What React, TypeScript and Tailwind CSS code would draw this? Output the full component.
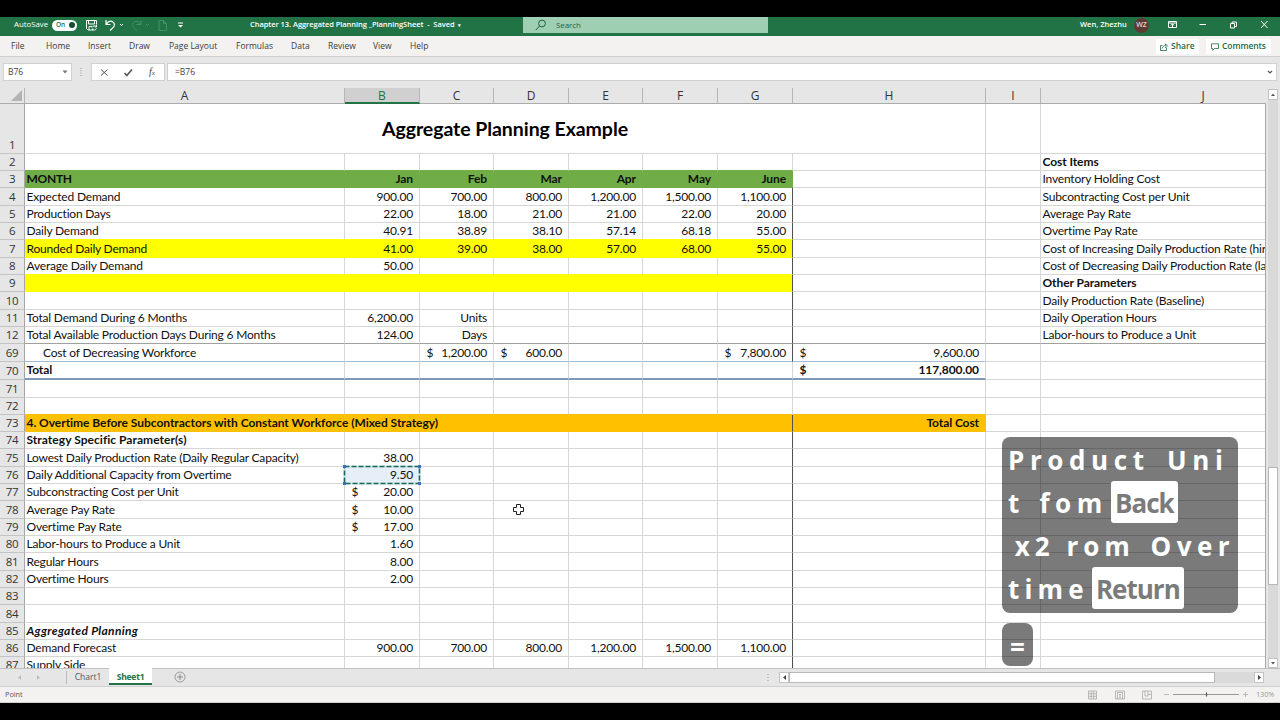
import { ReactNode } from "react";

const WIDTHS = [
  "w-[320px]", "w-[75px]", "w-[74px]", "w-[75px]", "w-[74px]",
  "w-[75px]", "w-[75px]", "w-[193px]", "w-[55px]", "w-[225px]",
];
const LETTERS = ["A", "B", "C", "D", "E", "F", "G", "H", "I", "J"];

type Fill = "green" | "yellow" | "orange";
type Row = {
  n: number;
  h: string;
  cells?: Record<number, string>;
  money?: number[];
  bold?: boolean;
  boldAt?: number[];
  italic?: boolean;
  indent?: boolean;
  fill?: Fill;
  under?: string;
  divider?: boolean;
  freeze?: boolean;
  track?: string;
};

const months = (a: string, v: string[], j?: string): Record<number, string> => {
  const cells: Record<number, string> = { 0: a };
  v.forEach((x, i) => (cells[i + 1] = x));
  if (j) cells[9] = j;
  return cells;
};

const GREEN_LINE = "border-b-[#70ad47]";
const YELLOW_LINE = "border-b-[#ffff00]";
const ORANGE_LINE = "border-b-[#ffc000]";

const ROWS: Row[] = [
  { n: 2, h: "h-[17px]", cells: { 9: "Cost Items" }, bold: true, under: GREEN_LINE },
  { n: 3, h: "h-[17px]", cells: months("MONTH", ["Jan", "Feb", "Mar", "Apr", "May", "June"], "Inventory Holding Cost"), boldAt: [0, 1, 2, 3, 4, 5, 6], fill: "green", track: "tracking-[-0.3px]" },
  { n: 4, h: "h-[18px]", cells: months("Expected Demand", ["900.00", "700.00", "800.00", "1,200.00", "1,500.00", "1,100.00"], "Subcontracting Cost per Unit"), divider: true },
  { n: 5, h: "h-[17px]", cells: months("Production Days", ["22.00", "18.00", "21.00", "21.00", "22.00", "20.00"], "Average Pay Rate"), divider: true },
  { n: 6, h: "h-[17px]", cells: months("Daily Demand", ["40.91", "38.89", "38.10", "57.14", "68.18", "55.00"], "Overtime Pay Rate"), divider: true, under: YELLOW_LINE },
  { n: 7, h: "h-[18px]", cells: months("Rounded Daily Demand", ["41.00", "39.00", "38.00", "57.00", "68.00", "55.00"], "Cost of Increasing Daily Production Rate (hiring)"), divider: true, fill: "yellow" },
  { n: 8, h: "h-[17px]", cells: months("Average Daily Demand", ["50.00"], "Cost of Decreasing Daily Production Rate (layoff)"), divider: true, under: YELLOW_LINE },
  { n: 9, h: "h-[17px]", cells: { 9: "Other Parameters" }, bold: true, divider: true, fill: "yellow" },
  { n: 10, h: "h-[18px]", cells: { 9: "Daily Production Rate (Baseline)" }, divider: true },
  { n: 11, h: "h-[17px]", cells: months("Total Demand During 6 Months", ["6,200.00", "Units"], "Daily Operation Hours"), divider: true },
  { n: 12, h: "h-[17px]", cells: months("Total Available Production Days During 6 Months", ["124.00", "Days"], "Labor-hours to Produce a Unit"), divider: true, freeze: true },
  { n: 69, h: "h-[18px]", cells: { 0: "Cost of Decreasing Workforce", 2: "1,200.00", 3: "600.00", 6: "7,800.00", 7: "9,600.00" }, money: [2, 3, 6, 7], indent: true, divider: true, under: "border-b-[#a3bcd6]" },
  { n: 70, h: "h-[18px]", cells: { 0: "Total", 7: "117,800.00" }, money: [7], bold: true, under: "border-b-2 border-b-[#7f99bb]" },
  { n: 71, h: "h-[18px]" },
  { n: 72, h: "h-[17px]", under: ORANGE_LINE },
  { n: 73, h: "h-[17px]", cells: { 0: "4. Overtime Before Subcontractors with Constant Workforce (Mixed Strategy)", 7: "Total Cost" }, bold: true, fill: "orange", divider: true, track: "tracking-[-0.04px]" },
  { n: 74, h: "h-[17px]", cells: { 0: "Strategy Specific Parameter(s)" }, bold: true, divider: true, track: "tracking-[0.04px]" },
  { n: 75, h: "h-[18px]", cells: { 0: "Lowest Daily Production Rate (Daily Regular Capacity)", 1: "38.00" }, divider: true },
  { n: 76, h: "h-[17px]", cells: { 0: "Daily Additional Capacity from Overtime", 1: "9.50" }, divider: true },
  { n: 77, h: "h-[17px]", cells: { 0: "Subconstracting Cost per Unit", 1: "20.00" }, money: [1], divider: true },
  { n: 78, h: "h-[18px]", cells: { 0: "Average Pay Rate", 1: "10.00" }, money: [1], divider: true },
  { n: 79, h: "h-[17px]", cells: { 0: "Overtime Pay Rate", 1: "17.00" }, money: [1], divider: true },
  { n: 80, h: "h-[17px]", cells: { 0: "Labor-hours to Produce a Unit", 1: "1.60" }, divider: true },
  { n: 81, h: "h-[18px]", cells: { 0: "Regular Hours", 1: "8.00" }, divider: true },
  { n: 82, h: "h-[17px]", cells: { 0: "Overtime Hours", 1: "2.00" }, divider: true },
  { n: 83, h: "h-[17px]", divider: true },
  { n: 84, h: "h-[18px]", divider: true },
  { n: 85, h: "h-[17px]", cells: { 0: "Aggregated Planning" }, bold: true, italic: true, divider: true, track: "tracking-[0.32px]" },
  { n: 86, h: "h-[17px]", cells: months("Demand Forecast", ["900.00", "700.00", "800.00", "1,200.00", "1,500.00", "1,100.00"]), divider: true },
  { n: 87, h: "h-[17px]", cells: { 0: "Supply Side" }, divider: true },
];

const FILLS: Record<Fill, string> = {
  green: "bg-[#70ad47] border-r-[#70ad47] border-b-[#70ad47]",
  yellow: "bg-[#ffff00] border-r-[#ffff00] border-b-[#ffff00]",
  orange: "bg-[#ffc000] border-r-[#ffc000] border-b-[#ffc000]",
};

function Selection() {
  return (
    <div className="pointer-events-none absolute -left-[2px] -top-[2px] z-20 h-[20px] w-[78px]">
      <svg width="78" height="20" viewBox="0 0 78 20" fill="none">
        <rect x="1.5" y="1.5" width="75" height="17" stroke="#cfe3f3" strokeWidth="2" />
        <rect x="1.5" y="1.5" width="75" height="17" stroke="#1c6b50" strokeWidth="1.6" strokeDasharray="5 2" />
        <path d="M0 0h3v3H0zM75 0h3v3h-3zM0 17h3v3H0zM75 17h3v3h-3z" fill="#3a72b8" />
      </svg>
    </div>
  );
}

function Cell({ row, i }: { row: Row; i: number }) {
  const filled = row.fill && (row.fill === "orange" ? i <= 7 : i <= 6);
  const inTable = i <= (row.n >= 69 && row.n <= 73 ? 7 : 6);
  const bold = row.boldAt ? row.boldAt.includes(i) : row.bold;
  const text = row.cells?.[i] ?? "";
  const left = i === 0 || i === 9;
  const selected = row.n === 76 && i === 1;

  let edge = "border-r-[#d6d6d6] border-b-[#d6d6d6]";
  if (filled && row.fill) edge = FILLS[row.fill];
  else if (row.freeze) edge = "border-r-[#d6d6d6] border-b-[#a0a0a0]";
  else if (row.under && inTable) edge = "border-r-[#d6d6d6] " + row.under;
  const dark = row.divider && i === 6 ? "border-r-[#505050]!" : "";

  let tracking = left ? "tracking-[-0.19px]" : "tracking-[-0.2px]";
  if (bold) tracking = i === 0 && row.track ? row.track : "tracking-[-0.08px]";

  return (
    <div
      className={`relative flex shrink-0 items-center border-r border-b whitespace-nowrap ${WIDTHS[i]} ${edge} ${dark} ${left ? "justify-start" : "justify-end pr-[6px]"} ${i === 9 ? "overflow-hidden" : ""} ${i === 0 ? "z-10" : ""} ${left ? (row.indent && i === 0 ? "pl-[18px]" : "pl-[1.5px]") : ""} ${bold ? "font-bold" : ""} ${tracking} ${row.italic ? "italic" : ""} ${selected ? "bg-[#e6eef8]" : ""}`}
    >
      {row.money?.includes(i) && <span className="mr-auto pl-[6.5px]">$</span>}
      <span>{text}</span>
      {selected && <Selection />}
    </div>
  );
}

function RowHeader({ children, tall }: { children: ReactNode; tall?: boolean }) {
  return (
    <div className={`flex w-[25px] shrink-0 justify-center border-r border-b border-r-[#a6a6a6] border-b-[#c4c4c4] bg-[#e6e6e6] font-['Open_Sans',sans-serif] text-[11.5px] tracking-[-0.4px] text-[#333] ${tall ? "items-end pb-px leading-[15px]" : "items-center"}`}>
      {children}
    </div>
  );
}

function Sheet() {
  return (
    <div className="flex h-[564px] w-[1266px] shrink-0 flex-col overflow-hidden border-r border-[#a6a6a6] bg-white font-[Lato,sans-serif] text-[12px] leading-[16px] text-[#111]">
      <div className="flex h-[50px] shrink-0">
        <RowHeader tall>1</RowHeader>
        <div className="flex w-[961px] shrink-0 items-center justify-center border-r border-b border-[#d6d6d6] text-[19.5px] font-bold tracking-[-0.06px] text-black">
          Aggregate Planning Example
        </div>
        <div className="w-[55px] shrink-0 border-r border-b border-[#d6d6d6]" />
        <div className="w-[225px] shrink-0 border-b border-[#d6d6d6]" />
      </div>
      {ROWS.map((row) => (
        <div key={row.n} className={`flex shrink-0 ${row.h}`}>
          <RowHeader>{row.n}</RowHeader>
          {LETTERS.map((l, i) => (
            <Cell key={l} row={row} i={i} />
          ))}
        </div>
      ))}
    </div>
  );
}

function TitleBar() {
  return (
    <div className="flex h-[19px] shrink-0 items-center bg-[#217346] pb-[3px] text-[7.5px] font-semibold text-white">
      <div className="flex w-[250px] shrink-0 items-center pl-[14px]">
        <span className="w-[38px] text-[7.8px] font-medium">AutoSave</span>
        <div className="flex h-[11px] w-[25px] items-center justify-between rounded-full bg-white pr-[2px] pl-[4px] text-[6.5px] text-[#217346]">
          On<span className="size-[6px] rounded-full bg-[#14502f]" />
        </div>
        <svg className="ml-[9px]" width="96" height="14" viewBox="0 0 96 14" fill="none" stroke="#fff" strokeWidth="1">
          <path d="M.5 2.500h10v4M.5 2.500v8l1.500 1.500H5M2.500 2.500v3.500h6V2.500M3 12V8.500h3M6 9.500a3 3 0 0 1 4.500-1M10.500 7v2H9M10.500 10.500a3 3 0 0 1-4.500 1M6 13v-2h1.500" />
          <path d="M20 2v4.500h4.500M20.200 6.300C22 3.500 24.500 2.600 26.500 3.700c2.300 1.300 2.500 4 .8 5.700L24 12.500" strokeWidth="1.200" />
          <path d="m34 6 1.500 1.500L37 6" />
          <g stroke="#3f9463">
            <path d="M55 2v4.500h-4.500M54.800 6.300C53 3.500 50.500 2.600 48.500 3.700c-2.300 1.300-2.500 4-.8 5.700L51 12.500" />
            <path d="m60 6 1.500 1.500L63 6M73 2.500h4.500l3 3v7H73zM77.500 2.500v3h3" />
          </g>
        </svg>
        <svg className="-ml-[5px]" width="7" height="8" viewBox="0 0 7 8">
          <path d="M1 1.500h5v1H1zM1 4h5L3.500 6.500z" fill="#fff" />
        </svg>
      </div>
      <span className="w-[273px] shrink-0 pb-px text-[7.5px] tracking-[-0.05px] whitespace-pre">Chapter 13. Aggregated Planning _PlanningSheet  -  Saved  <span className="text-[5px]">▾</span></span>
      <div className="flex h-[16px] w-[245px] shrink-0 items-center bg-[#9fcfb3] text-[8px] font-normal text-[#1d6440]">
        <svg className="ml-[12px]" width="12" height="12" viewBox="0 0 12 12" fill="none" stroke="#1d6440">
          <circle cx="7" cy="4.500" r="3.400" />
          <path d="M4.600 7 .8 11" />
        </svg>
        <span className="ml-[9px] tracking-[-0.1px]">Search</span>
      </div>
      <span className="ml-[312px] w-[54px] shrink-0 whitespace-nowrap">Wen, Zhezhu</span>
      <span className="flex size-[15px] shrink-0 items-center justify-center rounded-full bg-[#5f3a33] text-[7px] font-normal">WZ</span>
      <svg className="ml-[18px]" width="112" height="12" viewBox="0 0 112 12" fill="none" stroke="#fff" strokeWidth="1">
        <path d="M1.500 2.500h8v6h-8zM1.500 4h8M5.500 8V4.800M4 6.300l1.500-1.500L7 6.300" />
        <path d="M32.500 5.500h6.500" />
        <path d="M63.500 4.500h4v4.500h-4zM65 4.500v-1.500h4.500v4.500h-2" />
        <path d="m94 2 6.500 7M100.500 2 94 9" />
      </svg>
    </div>
  );
}

const MENU: [string, string][] = [
  ["File", "w-[35px]"], ["Home", "w-[42px]"], ["Insert", "w-[41px]"], ["Draw", "w-[40px]"],
  ["Page Layout", "w-[67px]"], ["Formulas", "w-[55px]"], ["Data", "w-[37px]"],
  ["Review", "w-[45px]"], ["View", "w-[37px]"], ["Help", "w-[30px]"],
];

function Menu() {
  return (
    <div className="flex h-[21px] shrink-0 items-center border-b border-[#d2d0ce] bg-[#f3f2f1] pt-px pl-[11px] text-[8.5px] text-[#3b3a39]">
      {MENU.map(([m, w]) => (
        <span key={m} className={`shrink-0 whitespace-nowrap ${w}`}>{m}</span>
      ))}
      <div className="mr-[9px] ml-auto flex gap-[7px] font-semibold text-[#1e6b45]">
        <div className="flex h-[15px] w-[43px] items-center gap-[3px] bg-white pl-[4px]">
          <svg width="8" height="8" viewBox="0 0 8 8" fill="none" stroke="#1e6b45" strokeWidth=".8">
            <path d="M2.500 2.500H.5v5h6V5M2.200 5.500C2.500 3.500 4 2.500 5.500 2.500V.8l2 2.200-2 2V3.700" />
          </svg>
          Share
        </div>
        <div className="flex h-[15px] w-[65px] items-center gap-[3px] bg-white pl-[5px]">
          <svg width="8" height="8" viewBox="0 0 8 8" fill="none" stroke="#1e6b45" strokeWidth=".8">
            <path d="M.5.8h7v4.700H3.500L1.800 7.300V5.500H.5z" />
          </svg>
          <span className="tracking-[-0.1px]">Comments</span>
        </div>
      </div>
    </div>
  );
}

function FormulaBar() {
  return (
    <div className="flex h-[24px] shrink-0 items-start bg-[#e6e6e6] pt-[6px] text-[8.5px] text-[#444]">
      <div className="ml-[3px] flex h-[18px] w-[69px] items-center justify-between border border-[#d0d0d0] bg-white pr-[3px] pl-[4px]">
        B76
        <svg width="6" height="4" viewBox="0 0 6 4"><path d="M.5.5h5L3 3.500z" fill="#777" /></svg>
      </div>
      <svg className="mt-[5px] ml-[8px]" width="2" height="8" viewBox="0 0 2 8" fill="#999">
        <path d="M.5 0h1v1h-1zM.5 2.300h1v1h-1zM.5 4.600h1v1h-1zM.5 7h1v1h-1z" />
      </svg>
      <div className="ml-[9px] flex h-[18px] w-[74px] items-center border border-[#d0d0d0] bg-white">
        <svg className="ml-[8px]" width="34" height="9" viewBox="0 0 34 9" fill="none" stroke="#555">
          <path d="m1 1.500 6.500 6M7.500 1.500 1 7.500" />
          <path d="m24.500 5 2.300 2.500L32 1.500" strokeWidth="1.600" />
        </svg>
        <span className="ml-[15px] pb-px font-['Liberation_Serif',serif] text-[10px] italic">f<span className="text-[7px]">x</span></span>
      </div>
      <div className="ml-[2px] flex h-[18px] w-[1110px] items-center border border-[#d0d0d0] bg-white pr-[3px] pl-[7px]">
        =B76
        <svg className="ml-auto" width="6" height="5" viewBox="0 0 6 5" fill="none" stroke="#555" strokeWidth="1.200"><path d="m1 1 2 2 2-2" /></svg>
      </div>
    </div>
  );
}

function ColumnHeaders() {
  return (
    <div className="flex h-[23px] w-[1266px] shrink-0 items-end overflow-hidden bg-[#e6e6e6] font-['Open_Sans',sans-serif] text-[12px] text-[#333]">
      <div className="flex h-[16px] w-[25px] shrink-0 items-start justify-end border-r border-b border-r-[#b5b5b5] border-b-[#ababab] pt-[2px] pr-[2px]">
        <svg width="11" height="11" viewBox="0 0 11 11"><path d="M11 0v11H0z" fill="#b3b3b3" /></svg>
      </div>
      {LETTERS.map((l, i) => (
        <div
          key={l}
          className={`flex h-[16px] shrink-0 items-center justify-center border-r ${l === "J" ? "w-[325px]" : WIDTHS[i]} ${l === "B" ? "border-b-2 border-r-[#b5b5b5] border-b-[#217346] bg-[#d0d0d0] pt-px text-[#217346]" : "border-b border-r-[#b5b5b5] border-b-[#ababab]"}`}
        >
          {l}
        </div>
      ))}
    </div>
  );
}

function VerticalScroll() {
  return (
    <div className="flex w-[14px] flex-1 flex-col items-center bg-[#e6e6e6] pt-[8px]">
      <div className="flex h-[11px] w-[10px] items-center justify-center border border-[#c3c3c3] bg-white">
        <svg width="4" height="3" viewBox="0 0 4 3"><path d="M0 3h4L2 .5z" fill="#555" /></svg>
      </div>
      <div className="flex w-[10px] flex-1 flex-col bg-[#d9d9d9]">
        <div className="mt-[367px] h-[118px] border border-[#b5b5b5] bg-white" />
      </div>
      <div className="flex h-[10px] w-[10px] items-center justify-center border border-[#c3c3c3] bg-white">
        <svg width="4" height="3" viewBox="0 0 4 3"><path d="M0 0h4L2 2.500z" fill="#555" /></svg>
      </div>
    </div>
  );
}

function TabBar() {
  return (
    <div className="flex h-[18px] shrink-0 items-start border-t border-[#c0c0c0] bg-[#e6e6e6] text-[8.5px] text-[#555]">
      <svg className="mt-[6px] ml-[17px]" width="24" height="5" viewBox="0 0 24 5" fill="#bdbdbd">
        <path d="M4 0v5L1 2.500zM20 0v5l3-2.500z" />
      </svg>
      <div className="mt-[2px] ml-[25px] flex h-[13px] w-[43px] items-center justify-center border-l border-[#bbb] pb-px">Chart1</div>
      <div className="-mt-px flex h-[17px] w-[43px] items-center justify-center border-b-2 border-[#217346] bg-white pt-[3px] font-bold tracking-[-0.2px] text-[#217346]">Sheet1</div>
      <svg className="mt-[2px] ml-[22px]" width="12" height="12" viewBox="0 0 12 12" fill="none" stroke="#888">
        <circle cx="6" cy="6" r="5" strokeWidth=".8" />
        <path d="M3 6h6M6 3v6" />
      </svg>
      <svg className="mt-[5px] ml-[581px]" width="2" height="8" viewBox="0 0 2 8" fill="#999">
        <path d="M.5 0h1v1h-1zM.5 3h1v1h-1zM.5 6h1v1h-1z" />
      </svg>
      <div className="mt-[3px] ml-[10px] flex h-[11px] w-[485px] bg-[#dadada]">
        <div className="flex w-[10px] items-center justify-center border border-[#c3c3c3] bg-white">
          <svg width="3" height="5" viewBox="0 0 3 5"><path d="M3 0v5L0 2.500z" fill="#444" /></svg>
        </div>
        <div className="w-[426px] border border-[#b9b9b9] bg-white" />
        <div className="ml-auto flex w-[10px] items-center justify-center border border-[#c3c3c3] bg-white">
          <svg width="3" height="5" viewBox="0 0 3 5"><path d="M0 0v5l3-2.500z" fill="#444" /></svg>
        </div>
      </div>
    </div>
  );
}

function StatusBar() {
  return (
    <div className="flex h-[17px] shrink-0 items-center border-t border-b border-[#d0d0d0] bg-[#f3f2f1] pl-[5px] text-[7.3px] text-[#555]">
      Point
      <svg className="ml-auto" width="168" height="10" viewBox="0 0 168 10" fill="none" stroke="#aaa" strokeWidth=".8">
        <path d="M.5 1h8v8h-8zM.5 3.700h8M.5 6.300h8M3.200 1v8M5.800 1v8" />
        <path d="M27.500 1h9v8h-9zM29.500 2.500h5V9M29.500 2.500V9M31 4.500h2M31 6h2M31 7.500h2" />
        <path d="M54.500 1h9v8h-9zM57 1v5h3V1M60 4.500h3.500" />
        <path d="M76 4.500h5M155 4.500h5M157.500 2v5" />
        <path d="M85 4.500h66" stroke="#999" strokeWidth="1.200" />
        <path d="M118.500 2.500v4" stroke="#555" strokeWidth="1.200" />
      </svg>
      <span className="mr-[5px] w-[19px] text-[7.3px] tracking-[-0.1px] whitespace-nowrap text-[#999]">130%</span>
    </div>
  );
}

function Key({ children }: { children: ReactNode }) {
  return (
    <span className="mb-[3px] ml-[3px] flex h-[42px] items-center rounded-[3px] bg-white px-[4px] pt-[3px] tracking-[-1px] text-[#7b7b7b]">{children}</span>
  );
}

function Keystrokes() {
  return (
    <div className="absolute top-[437px] left-[1002px] z-30 flex flex-col items-start gap-[10px] font-['Open_Sans',sans-serif] text-[26px] leading-[43px] font-bold whitespace-pre text-white">
      <div className="flex h-[176px] w-[236px] flex-col rounded-[8px] bg-black/52 pt-[2px] pl-[6px] tracking-[5.2px]">
        <div className="flex h-[43px] items-center tracking-[5.6px]">Product <span className="ml-[5px]">Uni</span></div>
        <div className="flex h-[43px] items-center">t <span className="ml-[3px] tracking-[5.6px]">fom</span><Key>Back</Key></div>
        <div className="flex h-[43px] items-center tracking-[5px]"><span className="-ml-[5px]"> x2 rom </span><span className="ml-[4px] tracking-[5.4px]">Over</span></div>
        <div className="flex h-[43px] items-center">time<Key>Return</Key></div>
      </div>
      <div className="flex h-[43px] w-[31px] items-center justify-center rounded-[8px] bg-black/52 pt-[6px]">=</div>
    </div>
  );
}

export default function App() {
  return (
    <div className="relative flex h-[720px] w-[1280px] flex-col overflow-hidden bg-black pt-[17px] font-['Open_Sans',sans-serif]">
      <TitleBar />
      <Menu />
      <FormulaBar />
      <div className="flex h-[587px] shrink-0 bg-[#e6e6e6]">
        <div className="flex w-[1266px] flex-col">
          <ColumnHeaders />
          <Sheet />
        </div>
        <VerticalScroll />
      </div>
      <TabBar />
      <StatusBar />
      <svg className="absolute top-[503px] left-[512px] z-30" width="13" height="13" viewBox="0 0 13 13">
        <path d="M4.500 1.500h4v3h3v4h-3v3h-4v-3h-3v-4h3z" fill="#fff" stroke="#222" />
      </svg>
      <Keystrokes />
    </div>
  );
}
